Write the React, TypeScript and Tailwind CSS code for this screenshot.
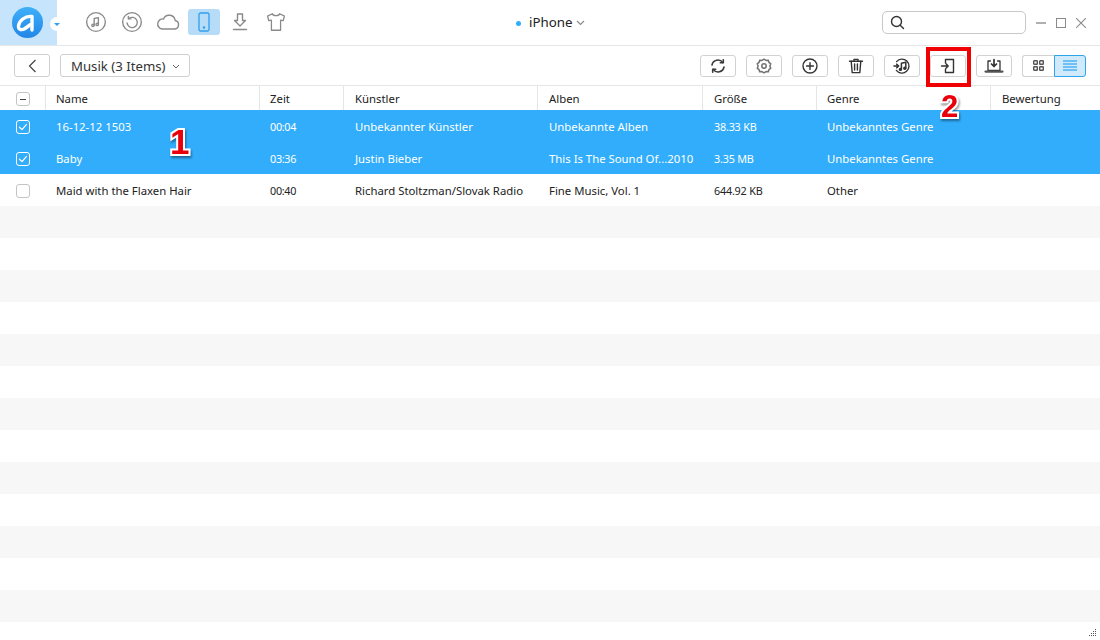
import React from 'react';

const rows = [
  { name: '16-12-12 1503', time: '00:04', artist: 'Unbekannter Künstler', album: 'Unbekannte Alben', size: '38.33 KB', genre: 'Unbekanntes Genre', selected: true },
  { name: 'Baby', time: '03:36', artist: 'Justin Bieber', album: 'This Is The Sound Of...2010', size: '3.35 MB', genre: 'Unbekanntes Genre', selected: true },
  { name: 'Maid with the Flaxen Hair', time: '00:40', artist: 'Richard Stoltzman/Slovak Radio', album: 'Fine Music, Vol. 1', size: '644.92 KB', genre: 'Other', selected: false },
];

const headers = ['Name', 'Zeit', 'Künstler', 'Alben', 'Größe', 'Genre', 'Bewertung'];
const gridCols = 'grid grid-cols-[46px_214px_84px_194px_165px_114px_174px_109px]';

const Icon = ({ size = 24, vb = 24, color = '#8a8a8a', sw = 1.5, children }: any) => (
  <svg width={size} height={size} viewBox={`0 0 ${vb} ${vb}`} fill="none" stroke={color} strokeWidth={sw} strokeLinecap="round" strokeLinejoin="round">
    {children}
  </svg>
);

const Checkbox = ({ state }: { state: 'none' | 'some' | 'on' }) => (
  <div className={`w-[14px] h-[14px] rounded-[3px] border flex items-center justify-center ${state === 'on' ? 'border-white' : 'border-[#c4c4c4]'}`}>
    {state === 'some' && <div className="w-[6px] h-px bg-[#444444]" />}
    {state === 'on' && (
      <Icon size={12} vb={12} color="#ffffff" sw={1.2}>
        <path d="M2.5 6.2 5 8.6 9.5 3.4" />
      </Icon>
    )}
  </div>
);

const ToolButton = ({ children }: any) => (
  <button className="w-9 h-[22px] rounded-[3px] border border-[#d2d2d2] bg-white flex items-center justify-center">
    {children}
  </button>
);

const NavIcon = ({ children, className = '' }: any) => (
  <div className={`w-8 h-[26px] flex items-center justify-center ${className}`}>{children}</div>
);

export default function App() {
  return (
    <div className="relative w-[1100px] h-[640px] overflow-hidden bg-white text-[#222222] font-['Noto_Sans','Open_Sans',sans-serif] text-[11.35px]">
      {/* top bar */}
      <div className="relative h-[46px] border-b border-[#e6e6e6] flex items-center">
        <div className="w-[57px] h-[45px] bg-[#c6e4fb] flex items-center pl-[12px] relative">
          <div className="w-[31px] h-[31px] rounded-full bg-gradient-to-b from-[#3fb0fa] to-[#2286e6]">
            <svg width="31" height="31" viewBox="0 0 31 31" fill="none" stroke="#ffffff" strokeWidth="3.4" strokeLinecap="round" strokeLinejoin="round">
              <path d="M20 23 20 9.5 C13 8.5 7 14 6.5 19 C6.2 23 10 23.5 13 21.5 L20 16.5" />
            </svg>
          </div>
          <div className="absolute left-[50px] top-[17px] w-[14px] h-[14px] rounded-full bg-white flex items-center justify-center">
            <div className="w-0 h-0 border-l-[3px] border-r-[3px] border-t-[3px] border-l-transparent border-r-transparent border-t-[#2f9fee]" />
          </div>
        </div>
        <div className="ml-[23px] flex items-center gap-[4px] -mt-[1px]">
          <NavIcon>
            <Icon size={22} sw={1.5}>
              <circle cx="12" cy="12" r="10.2" />
              <path d="M10 15.5V8.2l4.6-1v7.2" />
              <circle cx="8.7" cy="15.6" r="1.3" />
              <circle cx="13.3" cy="14.6" r="1.3" />
            </Icon>
          </NavIcon>
          <NavIcon>
            <Icon size={22} sw={1.5}>
              <circle cx="12" cy="12" r="10.2" />
              <path d="M8.6 8.2a5.6 5.6 0 1 1-2 4.8" />
              <path d="M8 5.8v2.8h2.8" />
            </Icon>
          </NavIcon>
          <NavIcon>
            <Icon size={26} sw={1.3}>
              <path d="M6.5 18.5h11.3a4 4 0 0 0 .8-7.9 5.6 5.6 0 0 0-10.7-1.4 4.7 4.7 0 0 0-1.4 9.3z" />
            </Icon>
          </NavIcon>
          <NavIcon className="bg-[#b6dcf8] rounded-[3px]">
            <svg width="12" height="20" viewBox="0 0 12 20" fill="none" stroke="#2f9fee" strokeWidth="1.3">
              <rect x="1" y="1" width="10" height="18" rx="1.5" />
              <circle cx="6" cy="15.5" r="0.6" fill="#2f9fee" />
            </svg>
          </NavIcon>
          <NavIcon>
            <Icon size={20} vb={20} sw={1.4}>
              <path d="M7.5 2h5v6.5h3L10 14 4.5 8.5h3z" />
              <path d="M3.5 17.5h13" />
            </Icon>
          </NavIcon>
          <NavIcon>
            <Icon size={22} sw={1.4}>
              <path d="M8 3 2.8 5.6l1.4 5 2.8-.6V21h10V10l2.8.6 1.4-5L16 3c-.6 2.6-7.4 2.6-8 0z" />
            </Icon>
          </NavIcon>
        </div>

        <div className="absolute left-[516px] top-[12px] flex items-center h-[22px] text-[13.3px] text-[#222222]">
          <div className="w-[5px] h-[5px] rounded-full bg-[#2faef8] mr-[8px]" />
          <span>iPhone</span>
          <svg className="ml-[4px]" width="9" height="6" viewBox="0 0 9 6" fill="none" stroke="#8a8a8a" strokeWidth="1.2">
            <path d="M1 1l3.5 3.5L8 1" />
          </svg>
        </div>

        <div className="ml-auto flex items-center pr-[14px]">
          <div className="w-[144px] h-[23px] rounded-[5px] border border-[#c8c8c8] flex items-center pl-[7px]">
            <Icon size={15} vb={15} color="#333333" sw={1.4}>
              <circle cx="6.5" cy="6.5" r="5" />
              <path d="M10.2 10.2 13.5 13.5" />
            </Icon>
          </div>
          <div className="ml-[10px] w-[10px] h-[2px] bg-[#b0b0b0]" />
          <div className="ml-[10px] w-[10px] h-[10px] border border-[#8a8a8a]" />
          <svg className="ml-[10px]" width="10" height="10" viewBox="0 0 10 10" stroke="#8a8a8a" strokeWidth="1.1">
            <path d="M0 0l10 10M10 0 0 10" />
          </svg>
        </div>
      </div>

      {/* toolbar */}
      <div className="h-[40px] border-b border-[#e6e6e6] flex items-center pl-[14px] pr-[14px]">
        <button className="w-9 h-[23px] rounded-[3px] border border-[#cfcfcf] flex items-center justify-center">
          <svg width="9" height="14" viewBox="0 0 9 14" fill="none" stroke="#444444" strokeWidth="1.2">
            <path d="M7.5 1 1.5 7l6 6" />
          </svg>
        </button>
        <button className="ml-[10px] w-[130px] h-[23px] rounded-[3px] border border-[#cfcfcf] flex items-center pl-[10px] pt-[2px] text-[13.2px] leading-none text-[#333333]">
          Musik (3 Items)
          <svg className="ml-[6px]" width="8" height="5" viewBox="0 0 8 5" fill="none" stroke="#666666" strokeWidth="1">
            <path d="M1 1l3 3 3-3" />
          </svg>
        </button>

        <div className="ml-auto flex items-center gap-[10px]">
          <ToolButton>
            <Icon size={16} vb={16} color="#3a3a3a" sw={1.6}>
              <path d="M2 7a6 6 0 0 1 10.8-2.4" />
              <path d="M14 9a6 6 0 0 1-10.8 2.4" />
              <path d="M13.3 1.8v3h-3" />
              <path d="M2.7 14.2v-3h3" />
            </Icon>
          </ToolButton>
          <ToolButton>
            <Icon size={16} vb={16} color="#707070" sw={1.5}>
              <path d="M8 1.2l2 1.2 2.3-.2.7 2.2 1.8 1.4-1 2.2 1 2.2-1.8 1.4-.7 2.2-2.3-.2-2 1.2-2-1.2-2.3.2-.7-2.2-1.8-1.4 1-2.2-1-2.2 1.8-1.4.7-2.2 2.3.2z" />
              <circle cx="8" cy="8" r="2.2" />
            </Icon>
          </ToolButton>
          <ToolButton>
            <Icon size={16} vb={16} color="#333333" sw={1.4}>
              <circle cx="8" cy="8" r="7" />
              <path d="M8 4.6v6.8M4.6 8h6.8" />
            </Icon>
          </ToolButton>
          <ToolButton>
            <Icon size={16} vb={16} color="#333333" sw={1.4}>
              <path d="M1.5 3.3h13M6 3.3V1.4h4v1.9" />
              <path d="M3.2 3.3 4.2 14.6h7.6l1-11.3" />
              <path d="M6.6 6v6M9.4 6v6" />
            </Icon>
          </ToolButton>
          <ToolButton>
            <Icon size={18} vb={18} color="#333333" sw={1.4}>
              <path d="M3.6 4.6a7 7 0 1 1-.2 8.8" />
              <path d="M1 9h4.5M3.8 7.2 5.6 9l-1.8 1.8" strokeWidth="1.6" />
              <path d="M8.4 12.4V6.2l4.4-1v6" strokeWidth="1.5" />
              <circle cx="7.4" cy="12.4" r="1" fill="#333333" />
              <circle cx="11.8" cy="11.2" r="1" fill="#333333" />
            </Icon>
          </ToolButton>
          <ToolButton>
            <Icon size={16} vb={16} color="#333333" sw={1.4}>
              <path d="M5.5 5V1.5h8v13h-8V11" />
              <path d="M1.5 8h6.5M6 5.8 8.2 8 6 10.2" />
            </Icon>
          </ToolButton>
          <ToolButton>
            <Icon size={20} vb={20} color="#333333" sw={1.3}>
              <path d="M6.5 5H4v9.5h12V5h-2.5" />
              <path d="M1.5 15.6h17" strokeWidth="2.2" stroke="#555555" />
              <path d="M10 3.5v7M7.5 8 10 10.5 12.5 8" strokeWidth="1.7" />
            </Icon>
          </ToolButton>
          <div className="flex">
            <button className="w-8 h-[22px] rounded-l-[3px] border border-r-0 border-[#d2d2d2] flex items-center justify-center">
              <svg width="11" height="11" viewBox="0 0 11 11" fill="none" stroke="#555555" strokeWidth="1.4">
                <rect x="0.7" y="0.7" width="3.6" height="3.6" rx="0.6" />
                <rect x="6.7" y="0.7" width="3.6" height="3.6" rx="0.6" />
                <rect x="0.7" y="6.7" width="3.6" height="3.6" rx="0.6" />
                <rect x="6.7" y="6.7" width="3.6" height="3.6" rx="0.6" />
              </svg>
            </button>
            <button className="w-8 h-[22px] rounded-r-[3px] border border-[#2fa4ee] bg-[#d0e9fb] flex flex-col items-center justify-center gap-[1px]">
              <div className="w-[14px] h-[2px] bg-[#6dbff5]" />
              <div className="w-[14px] h-[2px] bg-[#6dbff5]" />
              <div className="w-[14px] h-[2px] bg-[#6dbff5]" />
              <div className="w-[14px] h-[2px] bg-[#6dbff5]" />
            </button>
          </div>
        </div>
      </div>

      {/* table header */}
      <div className={`${gridCols} h-[24px] items-center`}>
        <div className="h-full flex items-center pl-[16px] pt-[2px] border-r border-[#e6e6e6]">
          <Checkbox state="some" />
        </div>
        {headers.map((h, i) => (
          <div key={h} className={`h-full flex items-center pt-[2px] ${i === 0 || i === 1 || i === 5 ? 'pl-[10px]' : 'pl-[11px]'} ${i < 6 ? 'border-r border-[#e6e6e6]' : ''}`}>
            {h}
          </div>
        ))}
      </div>

      {/* rows */}
      {rows.map((r) => (
        <div key={r.name} className={`${gridCols} h-[32px] pt-[2px] items-center ${r.selected ? 'bg-[#31adfb] text-white' : 'bg-white text-[#222222]'}`}>
          <div className="pl-[16px]">
            <Checkbox state={r.selected ? 'on' : 'none'} />
          </div>
          <div className="pl-[10px] whitespace-nowrap">{r.name}</div>
          <div className="pl-[10px] text-[10.8px] tracking-[-0.3px]">{r.time}</div>
          <div className="pl-[11px] whitespace-nowrap">{r.artist}</div>
          <div className="pl-[11px] whitespace-nowrap">{r.album}</div>
          <div className="pl-[11px] text-[10.8px] tracking-[-0.2px]">{r.size}</div>
          <div className="pl-[10px] whitespace-nowrap">{r.genre}</div>
          <div />
        </div>
      ))}

      {/* empty stripes */}
      {Array.from({ length: 13 }).map((_, i) => (
        <div key={i} className={`h-[32px] ${i % 2 === 0 ? 'bg-[#f7f7f7]' : 'bg-white'}`} />
      ))}

      {/* resize grip */}
      <svg className="absolute right-[3px] bottom-[3px]" width="8" height="8" viewBox="0 0 8 8" fill="#555555">
        <rect x="6" y="0" width="1" height="1" />
        <rect x="4" y="2" width="1" height="1" />
        <rect x="6" y="2" width="1" height="1" />
        <rect x="2" y="4" width="1" height="1" />
        <rect x="4" y="4" width="1" height="1" />
        <rect x="6" y="4" width="1" height="1" />
        <rect x="0" y="6" width="1" height="1" />
        <rect x="2" y="6" width="1" height="1" />
        <rect x="4" y="6" width="1" height="1" />
        <rect x="6" y="6" width="1" height="1" />
      </svg>

      {/* annotations */}
      <div className="absolute left-[926px] top-[47px] w-[45px] h-[40px] border-[4px] border-[#f00000]" />
      <div className="absolute left-[170px] top-[124px] font-['Liberation_Sans',sans-serif] font-bold text-[35px] leading-none text-[#e8000b] [-webkit-text-stroke:4px_#ffffff] [paint-order:stroke_fill] drop-shadow-[1px_2px_1px_rgba(0,0,0,0.4)]">
        1
      </div>
      <div className="absolute left-[941px] top-[91px] font-['Liberation_Sans',sans-serif] font-bold text-[31px] leading-none text-[#e8000b] [-webkit-text-stroke:4px_#ffffff] [paint-order:stroke_fill] drop-shadow-[1px_2px_1px_rgba(0,0,0,0.4)]">
        2
      </div>
    </div>
  );
}
